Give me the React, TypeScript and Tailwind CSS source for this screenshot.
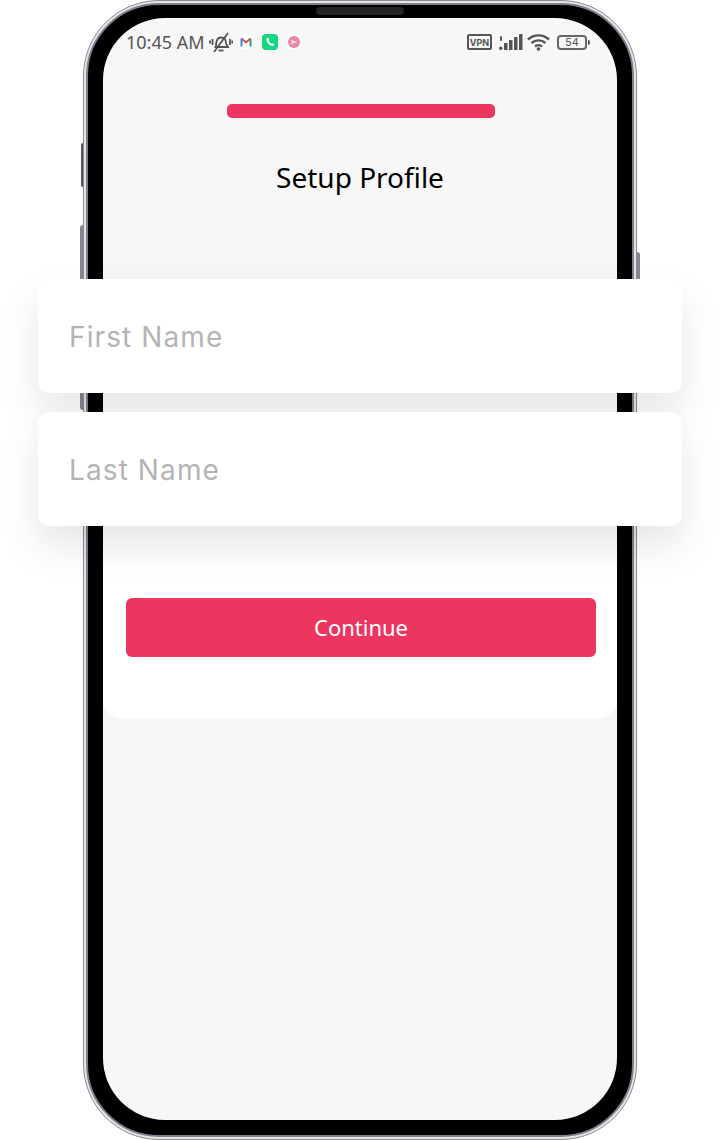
import React from "react";

function Card({ label }: { label: string }) {
  return (
    <div className="relative z-10 -mx-[65px] flex h-[114px] items-center rounded-[12px] bg-white pl-[31px] pt-[2px] text-[28px] tracking-[1.1px] text-[#b4b4b4] shadow-[0_20px_40px_rgba(0,0,0,0.1)] [font-family:Inter,sans-serif]">
      {label}
    </div>
  );
}

function StatusLeft() {
  return (
    <div className="flex items-center">
      <span className="text-[18px] leading-[22px] text-[#555] [font-family:'Noto_Sans',sans-serif]">10:45 AM</span>
      <svg width="24" height="22" viewBox="0 0 24 22" className="ml-[4px]" fill="none" stroke="#555" strokeWidth="1.8">
        <path d="M7 15.500c0-5 1-9 5-9s5 3 5 6l2 3.500H5.500" />
        <path d="M9.500 19.500h5" />
        <path d="M5 21L19 2" />
        <path d="M3.500 8v6M1 9.500v3M21 8v6M23.300 9.500v3" />
      </svg>
      <svg width="14" height="14" viewBox="0 0 14 14" className="ml-[6px]" fill="none">
        <rect width="14" height="14" rx="3" fill="#fff" />
        <path d="M2.500 3.500L7 7.500 11.500 3.500" stroke="#e5483d" strokeWidth="1.800" />
        <path d="M2.500 11.500V3.500" stroke="#3a7de8" strokeWidth="2" />
        <path d="M11.500 11.500V3.500" stroke="#2ca25f" strokeWidth="2" />
      </svg>
      <svg width="16" height="16" viewBox="0 0 16 16" className="ml-[9px]">
        <rect width="16" height="16" rx="4" fill="#0fd980" />
        <path d="M5 4c-1 1-.8 2.500.5 4.500S9 12 10.500 12c1 0 1.800-1 1.500-1.500L10.500 9l-1 .8C8.500 9.300 7 7.500 6.800 6.800L7.500 6 6.300 4C6 3.700 5.400 3.700 5 4z" fill="#fff" />
      </svg>
      <svg width="14" height="14" viewBox="0 0 14 14" className="ml-[9px]">
        <rect width="14" height="14" rx="3" fill="#fff" />
        <circle cx="7" cy="7" r="6" fill="#e788a8" />
        <path d="M3.500 4.500L10.500 7 3.500 9.500 5 7z" fill="#f7d5e0" />
      </svg>
    </div>
  );
}

function StatusRight() {
  return (
    <div className="flex items-center">
      <div className="flex h-[16px] w-[25px] items-center justify-center rounded-[2px] border-2 border-[#555] text-[9px] font-bold leading-none text-[#555] [font-family:Inter,sans-serif]">
        VPN
      </div>
      <svg width="24" height="18" viewBox="0 0 24 18" className="ml-[7px]" fill="#555">
        <rect x="0" y="13.500" width="3.500" height="3.500" rx="1.700" />
        <rect x="5" y="10" width="3.500" height="7" rx="0.500" />
        <rect x="10" y="7" width="3.500" height="10" rx="0.500" />
        <rect x="15" y="4" width="3.500" height="13" rx="0.500" />
        <rect x="20" y="1" width="3.500" height="16" rx="0.500" />
        <rect x="1" y="3" width="2" height="5" rx="1" />
      </svg>
      <svg width="24" height="18" viewBox="0 0 24 18" className="ml-[4px]" fill="none" stroke="#555" strokeWidth="2.400">
        <path d="M1 6.500c6-5.500 15-5.500 21 0" />
        <path d="M4.500 10c4-3.500 10-3.500 14 0" />
        <path d="M8 13.500c2-1.700 5-1.700 7 0" />
        <circle cx="11.500" cy="16" r="1.800" fill="#555" stroke="none" />
      </svg>
      <div className="ml-[6px] flex items-center">
        <div className="flex h-[15px] w-[30px] items-center justify-center rounded-[4px] border-2 border-[#666] text-[11px] leading-none text-[#555] [font-family:Inter,sans-serif]">
          54
        </div>
        <div className="ml-px h-[5px] w-[2px] rounded-r-sm bg-[#555]" />
      </div>
    </div>
  );
}

export default function App() {
  return (
    <div className="relative h-[1140px] w-[720px] overflow-hidden bg-white">
      {/* side buttons */}
      <div className="absolute left-[81px] top-[143px] h-[44px] w-[2px] rounded-l bg-[#55565c]" />
      <div className="absolute left-[80px] top-[225px] h-[185px] w-[3px] rounded-l bg-[#85868c]" />
      <div className="absolute left-[637px] top-[252px] h-[90px] w-[3px] rounded-r bg-[#85868c]" />

      <div className="ml-[83px] h-[1140px] w-[554px] rounded-[76px] border border-[#8b8c92] bg-[#e4e5e8] p-[2px]">
        <div className="relative h-full w-full rounded-[73px] border-2 border-[#7e808c] bg-black px-[15px] pb-[15px] pt-[13px]">
          <div className="absolute left-[228px] top-[2px] h-[8px] w-[88px] rounded-full bg-[#232325]" />
          <div className="flex h-full flex-col rounded-[62px] bg-[#f7f7f7]">
            <div className="flex h-[48px] items-center justify-between pl-[23px] pr-[27px]">
              <StatusLeft />
              <StatusRight />
            </div>
            <div className="ml-[124px] mt-[38px] h-[14px] w-[268px] rounded-[5px] bg-[#ec355f]" />
            <div className="mt-[39px] text-center text-[28px] leading-[40px] text-black [font-family:'Noto_Sans',sans-serif]">
              Setup Profile
            </div>
            <div className="mt-[82px] rounded-b-[20px] bg-white pb-[62px]">
              <Card label="First Name" />
              <div className="h-[19px]" />
              <Card label="Last Name" />
              <div className="ml-[23px] mr-[21px] mt-[72px] flex h-[59px] items-center justify-center rounded-[6px] bg-[#ec355f] text-[22px] text-white [font-family:'Noto_Sans',sans-serif]">
                Continue
              </div>
            </div>
          </div>
        </div>
      </div>
    </div>
  );
}
